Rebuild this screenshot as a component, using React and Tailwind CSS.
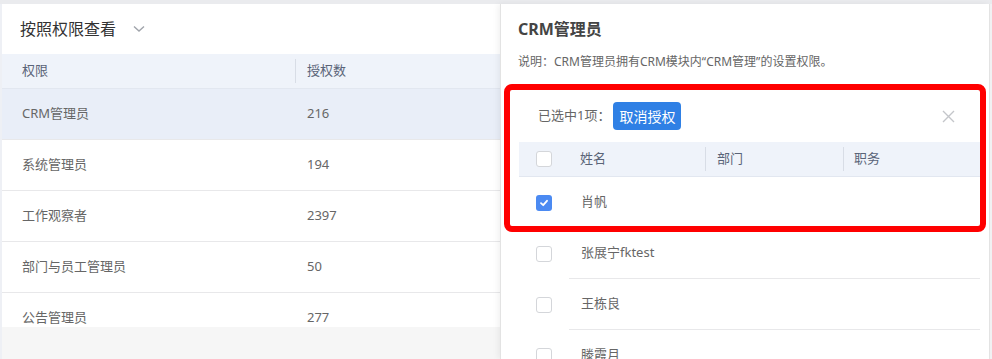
import { useState } from "react";

const roles = [
  { name: "CRM管理员", count: 216 },
  { name: "系统管理员", count: 194 },
  { name: "工作观察者", count: 2397 },
  { name: "部门与员工管理员", count: 50 },
  { name: "公告管理员", count: 277 },
];

const users = [
  { name: "肖帆", checked: true },
  { name: "张展宁fktest", checked: false },
  { name: "王栋良", checked: false },
  { name: "滕霞月", checked: false },
];

const Checkbox = ({ checked }) =>
  checked ? (
    <span className="w-4 h-4 rounded-[3px] bg-[#4b8af2] flex items-center justify-center">
      <svg width="10" height="10" viewBox="0 0 10 10" fill="none">
        <path d="M2 5.2 L4.2 7.2 L8 2.8" stroke="#fff" strokeWidth="1.8" strokeLinecap="round" strokeLinejoin="round" />
      </svg>
    </span>
  ) : (
    <span className="w-4 h-4 rounded-[3px] border border-[#d4d6da] bg-white" />
  );

const App = () => {
  const [active, setActive] = useState(0);

  return (
    <div
      className="w-[992px] h-[359px] overflow-hidden bg-[#eaebee] pt-1 flex text-[#666]"
      style={{ fontFamily: '"Noto Sans", "Noto Sans CJK SC", sans-serif' }}
    >
      {/* left gutter */}
      <div className="w-[2px] bg-[#eef0f5]" />

      {/* Left panel */}
      <div className="w-[498px] flex flex-col bg-[#f6f6f6]">
        <div className="bg-white">
          <div className="h-[50px] flex items-center pl-[18px] gap-[17px]">
            <span className="text-[16px] text-[#333]">按照权限查看</span>
            <svg width="12" height="8" viewBox="0 0 12 8" fill="none">
              <path d="M1 1.5 L6 6 L11 1.5" stroke="#a0a4ab" strokeWidth="1.4" />
            </svg>
          </div>
          <div className="h-[35px] flex items-center bg-[#eff3fa] border-b border-[#e2e7f0] text-[13px] text-[#5a6478]">
            <div className="w-[293px] pl-[20px]">权限</div>
            <div className="h-[24px] w-px bg-[#d8dde6]" />
            <div className="pl-[11px]">授权数</div>
          </div>
        </div>
        <div className="h-[238px] overflow-hidden bg-white">
          {roles.map((r, i) => (
            <div
              key={r.name}
              onClick={() => setActive(i)}
              className={`h-[51px] flex items-center border-b border-[#e8e8ea] text-[13px] ${
                active === i ? "bg-[#e9eef8]" : "bg-white"
              }`}
            >
              <div className="w-[293px] pl-[20px]">{r.name}</div>
              <div className="pl-[12px]">{r.count}</div>
            </div>
          ))}
        </div>
      </div>

      {/* Drawer */}
      <div className="relative w-[489px] bg-white border-l border-[#e3e3e3] shadow-[-2px_0_6px_rgba(0,0,0,0.06)]">
        <div className="pl-[17px] pt-[13px]">
          <h2 className="text-[16px] font-bold text-[#444] leading-6">CRM管理员</h2>
          <p className="text-[12px] text-[#666] mt-[13px] leading-4">
            说明：CRM管理员拥有CRM模块内“CRM管理”的设置权限。
          </p>
        </div>

        <div className="ml-[18px] mr-[9px] mt-[20px]">
          {/* toolbar */}
          <div className="h-[52px] flex items-center pl-[19px] pr-[25px] text-[13px]">
            <span className="text-[#666]">已选中1项：</span>
            <button className="ml-[3px] h-[28px] px-[6px] rounded-[4px] bg-[#2f80e5] text-white text-[14px]">
              取消授权
            </button>
            <svg className="ml-auto" width="13" height="13" viewBox="0 0 13 13" fill="none">
              <path d="M1 1 L12 12 M12 1 L1 12" stroke="#c4c6ca" strokeWidth="1.4" />
            </svg>
          </div>

          {/* header */}
          <div className="h-[35px] flex items-center bg-[#eff3fa] border-b border-[#e2e7f0] text-[13px] text-[#5a6478]">
            <div className="w-[50px] flex justify-center">
              <Checkbox checked={false} />
            </div>
            <div className="w-[136px] pl-[11px]">姓名</div>
            <div className="h-[24px] w-px bg-[#d8dde6]" />
            <div className="w-[137px] pl-[11px]">部门</div>
            <div className="h-[24px] w-px bg-[#d8dde6]" />
            <div className="pl-[10px]">职务</div>
          </div>

          {/* rows */}
          {users.map((u) => (
            <div key={u.name} className="h-[51px] flex items-center">
              <div className="w-[50px] flex justify-center">
                <Checkbox checked={u.checked} />
              </div>
              <div className="flex-1 h-full flex items-center pl-[12px] border-b border-[#e8e8ea] text-[13px] text-[#666]">
                {u.name}
              </div>
            </div>
          ))}
        </div>

        {/* highlight annotation */}
        <div className="absolute left-[3px] top-[80px] w-[482px] h-[148px] border-[6px] border-[#ff0000] rounded-[8px] pointer-events-none" />
      </div>

      {/* right gutter */}
      <div className="flex-1 bg-[#f2f2f4] border-l border-[#e6e6e6]" />
    </div>
  );
};

export default App;
